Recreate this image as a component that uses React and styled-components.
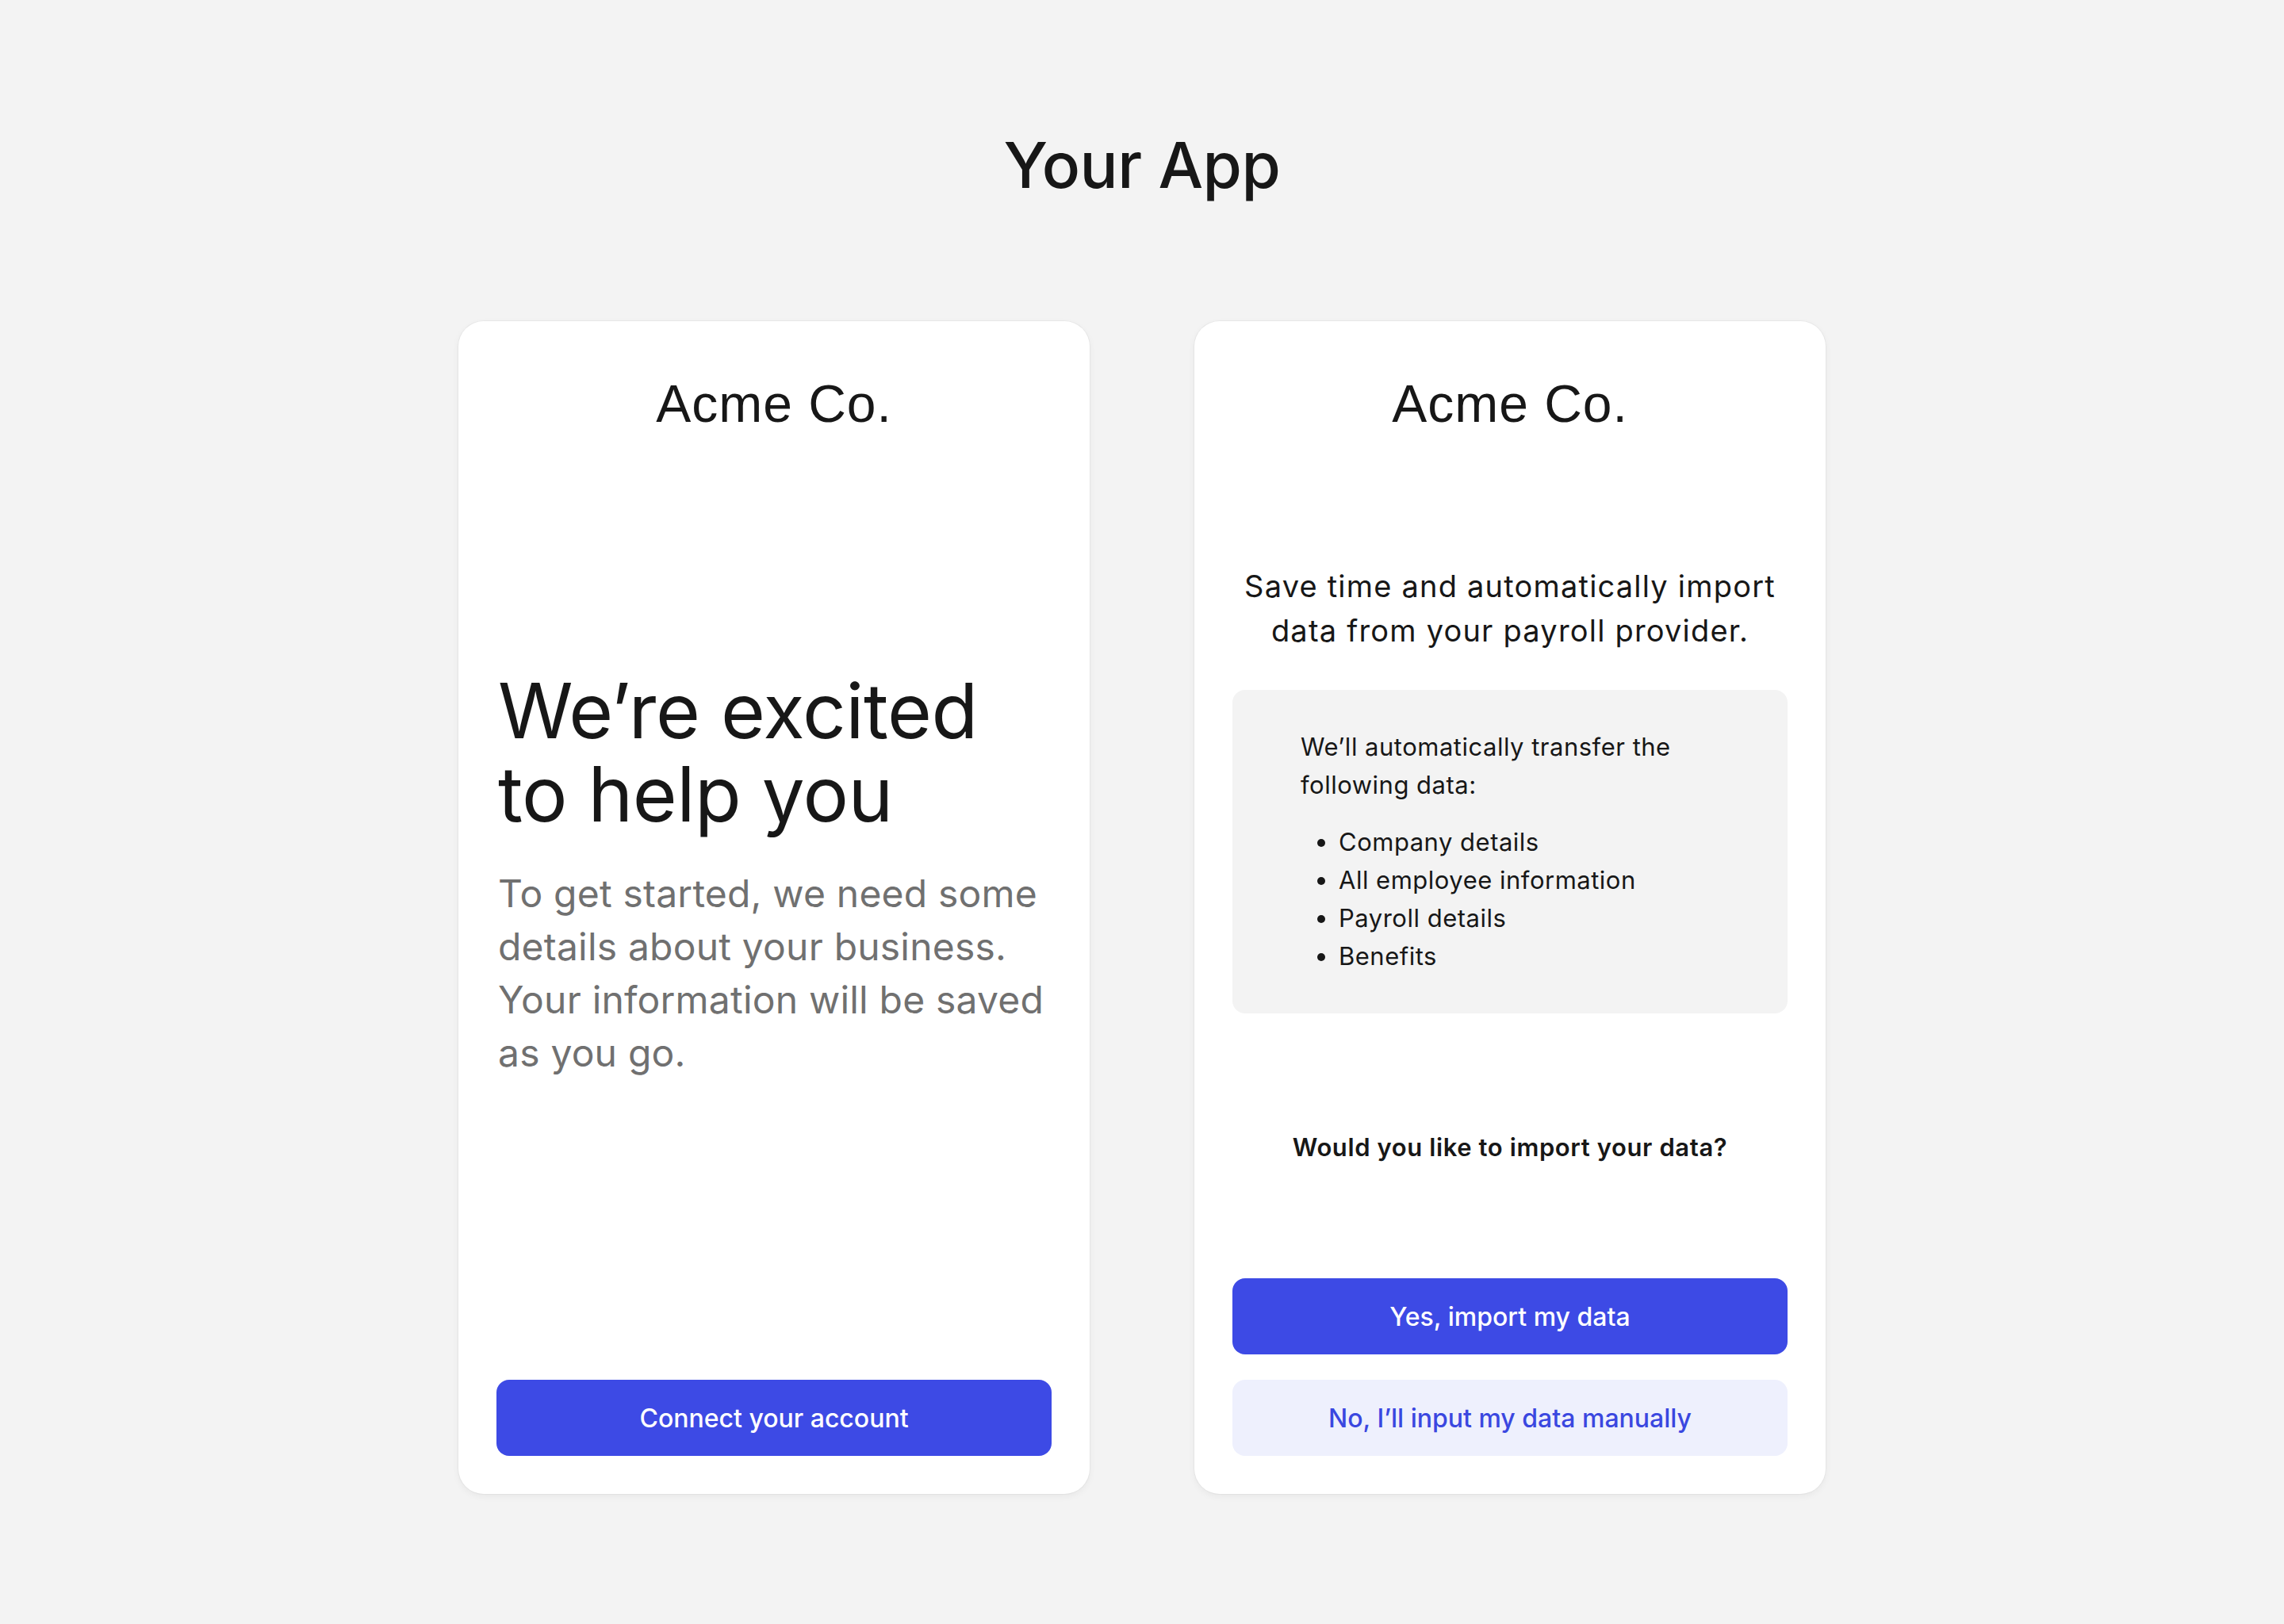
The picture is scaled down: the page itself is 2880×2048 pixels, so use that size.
import React from 'react';
import styled, { createGlobalStyle } from 'styled-components';

const GlobalStyle = createGlobalStyle`
  html, body {
    margin: 0;
    padding: 0;
    background: #f3f3f3;
  }
  body {
    font-family: Inter, "Noto Sans", sans-serif;
    color: #171717;
  }
`;

const Page = styled.div`
  min-height: 2048px;
  padding-top: 160px;
  box-sizing: border-box;
  display: flex;
  flex-direction: column;
  align-items: center;
`;

const AppTitle = styled.h1`
  margin: 0;
  font-size: 80px;
  line-height: 96px;
  font-weight: 500;
  letter-spacing: -0.5px;
  color: #171717;
`;

const Cards = styled.div`
  margin-top: 149px;
  display: grid;
  grid-template-columns: 796px 796px;
  gap: 132px;
  align-items: stretch;
`;

const Card = styled.section`
  background: #fff;
  border-radius: 32px;
  box-shadow: 0 0 0 1px rgba(0, 0, 0, 0.035), 0 3px 10px rgba(0, 0, 0, 0.05);
  padding: 48px;
  display: flex;
  flex-direction: column;
  box-sizing: border-box;
`;

const Logo = styled.div`
  margin-top: 24px;
  text-align: center;
  font-family: "Liberation Sans", Arial, sans-serif;
  font-size: 66px;
  line-height: 64px;
  letter-spacing: 1px;
  color: #171717;
`;

/* left card */
const Headline = styled.h2`
  margin: 303px 0 0;
  padding-left: 2px;
  font-size: 96px;
  line-height: 105px;
  font-weight: 400;
  letter-spacing: -0.5px;
  color: #171717;
`;

const Lead = styled.p`
  margin: 39px 0 0;
  padding-left: 2px;
  font-size: 48px;
  line-height: 67px;
  color: #707070;
  letter-spacing: 0.2px;
`;

const Button = styled.button`
  width: 100%;
  height: 96px;
  border: none;
  border-radius: 16px;
  font-family: Inter, sans-serif;
  font-size: 32px;
  font-weight: 500;
  cursor: pointer;
  margin-top: ${p => p.$top || '0'};
  background: ${p => (p.$secondary ? '#eef0fd' : '#3d4ae5')};
  color: ${p => (p.$secondary ? '#3a47e0' : '#ffffff')};
`;

/* right card */
const Subtitle = styled.p`
  margin: 170px 0 0;
  text-align: center;
  font-size: 38px;
  line-height: 56px;
  letter-spacing: 1.2px;
  color: #171717;
`;

const InfoBox = styled.div`
  margin-top: 47px;
  background: #f3f3f3;
  border-radius: 16px;
  padding: 48px 60px 48px 86px;
  font-size: 31px;
  line-height: 48px;
  letter-spacing: 0.5px;
  color: #171717;
`;

const InfoText = styled.p`
  margin: 0;
  max-width: 520px;
`;

const DataList = styled.ul`
  margin: 24px 0 0;
  padding-left: 48px;
`;

const Question = styled.p`
  margin: 145px 0 0;
  text-align: center;
  font-size: 31px;
  line-height: 48px;
  font-weight: 600;
  letter-spacing: 0.6px;
  color: #171717;
`;

const dataItems = ['Company details', 'All employee information', 'Payroll details', 'Benefits'];

export default function App() {
  return (
    <>
      <GlobalStyle />
      <Page>
        <AppTitle>Your App</AppTitle>
        <Cards>
          <Card>
            <Logo>Acme Co.</Logo>
            <Headline>
              We’re excited
              <br />
              to help you
            </Headline>
            <Lead>
              To get started, we need some details about your business. Your information will be saved as you go.
            </Lead>
            <Button $top="auto">Connect your account</Button>
          </Card>

          <Card>
            <Logo>Acme Co.</Logo>
            <Subtitle>
              Save time and automatically import
              <br />
              data from your payroll provider.
            </Subtitle>
            <InfoBox>
              <InfoText>We’ll automatically transfer the following data:</InfoText>
              <DataList>
                {dataItems.map(item => (
                  <li key={item}>{item}</li>
                ))}
              </DataList>
            </InfoBox>
            <Question>Would you like to import your data?</Question>
            <Button $top="141px">Yes, import my data</Button>
            <Button $top="32px" $secondary>
              No, I’ll input my data manually
            </Button>
          </Card>
        </Cards>
      </Page>
    </>
  );
}
